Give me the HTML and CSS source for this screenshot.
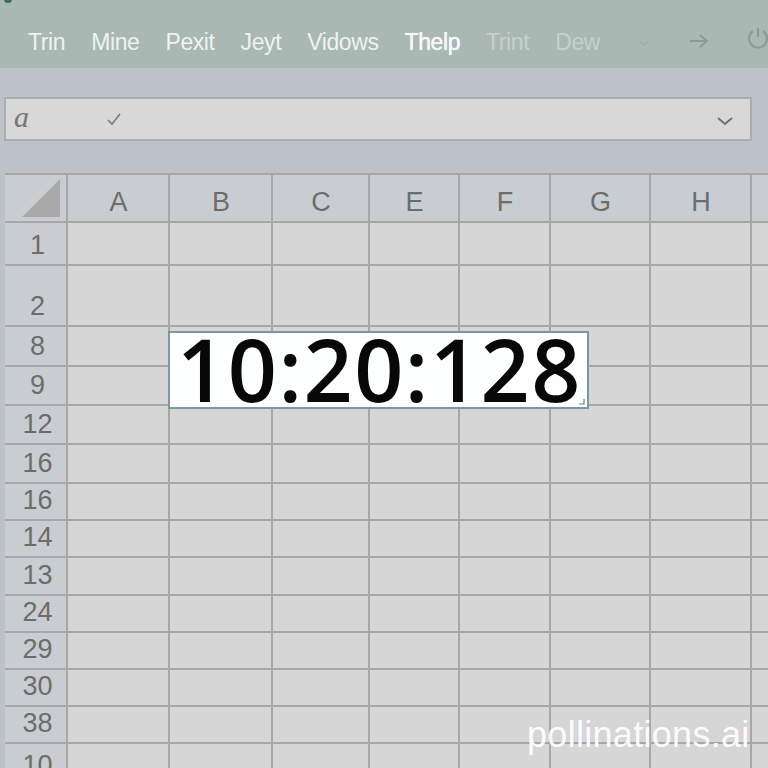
FILE: index.html
```html
<!DOCTYPE html>
<html lang="en">
<head>
    <meta charset="UTF-8">
    <meta name="viewport" content="width=device-width, initial-scale=1.0">
    <title>Sheet Timer</title>
    <link rel="stylesheet" href="styles.css">
</head>
<body>
    <span class="dot"></span>
    <div class="menubar">
        <span class="menu">Trin</span>
        <span class="menu">Mine</span>
        <span class="menu">Pexit</span>
        <span class="menu">Jeyt</span>
        <span class="menu">Vidows</span>
        <span class="menu strong">Thelp</span>
        <span class="menu faded">Trint</span>
        <span class="menu faded">Dew</span>
        <div class="icons">
            <svg class="ico-chev" width="14" height="8" viewBox="0 0 14 8"><path d="M2 2 L7 6 L12 2" fill="none" stroke="#9eaeaa" stroke-width="1.6"/></svg>
            <svg class="ico-arrow" width="22" height="16" viewBox="0 0 22 16"><path d="M2 8 H19 M12 2 L19 8 L12 14" fill="none" stroke="#8c9b97" stroke-width="2"/></svg>
            <svg class="ico-power" width="24" height="26" viewBox="0 0 24 26"><path d="M7 5 A9 9 0 1 0 17 5" fill="none" stroke="#8c9b97" stroke-width="2.2"/><path d="M12 2 V11" stroke="#8c9b97" stroke-width="2.2"/></svg>
        </div>
    </div>

    <div class="formula-area">
        <div class="formula">
            <span class="fx">a</span>
            <svg class="check" width="16" height="14" viewBox="0 0 16 14"><path d="M2 8 L6 12 L14 2" fill="none" stroke="#7a7a7a" stroke-width="1.6"/></svg>
            <svg class="drop" width="18" height="10" viewBox="0 0 18 10"><path d="M2 2 L9 8 L16 2" fill="none" stroke="#6f6f6f" stroke-width="2"/></svg>
        </div>
    </div>

    <div class="sheet">
        <div class="grid" id="grid"></div>
        <div class="timer">
            10:20:128
            <svg class="handle" width="7" height="7" viewBox="0 0 7 7"><path d="M6 1 V6 H1" fill="none" stroke="#6a7c84" stroke-width="1.2"/></svg>
        </div>
    </div>

    <div class="watermark">pollinations.ai</div>

    <script>
        const cols = ['A', 'B', 'C', 'E', 'F', 'G', 'H', ''];
        const rows = ['1', '2', '8', '9', '12', '16', '16', '14', '13', '24', '29', '30', '38', '10'];
        const grid = document.getElementById('grid');

        // header row with the corner triangle
        let html = '<div class="corner"><svg width="61" height="46" viewBox="0 0 61 46"><polygon points="17,42 55,4 55,42" fill="#a9a9a9"/></svg></div>';
        for (let c of cols) {
            html += '<div class="colhead">' + c + '</div>';
        }
        for (let r of rows) {
            html += '<div class="rowhead">' + r + '</div>';
            for (let i = 0; i < cols.length; i++) {
                html += '<div class="cell"></div>';
            }
        }
        grid.innerHTML = html;
    </script>
</body>
</html>
```

FILE: styles.css
```css
body {
    margin: 0;
    width: 768px;
    height: 768px;
    overflow: hidden;
    position: relative;
    background-color: #bcc2c8;
    font-family: "Liberation Sans", Arial, sans-serif;
}
.dot {
    position: absolute;
    left: 4px;
    top: -4px;
    width: 8px;
    height: 7px;
    border-radius: 50%;
    background-color: #3f6a5c;
}
.menubar {
    height: 68px;
    box-sizing: border-box;
    background-color: #a9b8b3;
    display: flex;
    align-items: flex-start;
    padding: 31px 0 0 28px;
    gap: 26px;
}
.menu {
    font-size: 23px;
    line-height: 1;
    letter-spacing: -0.4px;
    color: #eef2f0;
}
.menu.strong {
    color: #f7f9f8;
    text-shadow: 0 0 1px #ffffff;
}
.menu.faded {
    color: #c4d0cc;
}
.icons {
    display: flex;
    align-items: center;
    margin-left: 11px;
    margin-top: -1px;
}
.ico-chev {
    margin-top: 4px;
}
.ico-arrow {
    margin-left: 37px;
}
.ico-power {
    margin-left: 36px;
    margin-top: -4px;
}
.formula-area {
    height: 105px;
    box-sizing: border-box;
    padding: 29px 0 0 4px;
}
.formula {
    width: 748px;
    height: 44px;
    box-sizing: border-box;
    background-color: #d8d8d8;
    border: 2px solid #a9aeb2;
    display: flex;
    align-items: center;
    padding-left: 8px;
}
.fx {
    font-family: "Liberation Serif", serif;
    font-style: italic;
    font-size: 30px;
    line-height: 1;
    color: #777777;
    margin-top: -4px;
}
.check {
    margin-left: 77px;
}
.drop {
    margin-left: auto;
    margin-right: 16px;
    margin-top: 4px;
}
.sheet {
    position: relative;
    margin-left: 5px;
}
.grid {
    display: grid;
    grid-template-columns: 61px 100px 101px 95px 88px 89px 98px 99px 1fr;
    grid-template-rows: 46px 41px 59px 38px 37px 37px 37px 35px 35px 36px 35px 35px 35px 35px 40px;
    gap: 2px;
    padding-top: 2px;
    background-color: #a7a7a7;
}
.corner,
.colhead,
.rowhead {
    background-color: #c9ccd1;
    display: flex;
    align-items: flex-end;
    justify-content: center;
    font-size: 27px;
    line-height: 1;
    color: #6c6c6c;
    padding-bottom: 5px;
    box-sizing: border-box;
}
.rowhead {
    padding-left: 4px;
}
.colhead {
    padding-left: 1px;
}
.corner {
    padding: 0;
}
.cell {
    background-color: #d6d6d6;
}
.timer {
    position: absolute;
    left: 163px;
    top: 158px;
    width: 421px;
    height: 78px;
    box-sizing: border-box;
    border: 2px solid #7d97a2;
    background-color: #fdfefe;
    display: flex;
    align-items: center;
    justify-content: center;
    font-family: "Open Sans", "Noto Sans", sans-serif;
    font-weight: 600;
    font-size: 86px;
    line-height: 1;
    letter-spacing: 1.5px;
    color: #080808;
    padding: 0 0 3px 2px;
}
.handle {
    position: absolute;
    right: 2px;
    bottom: 2px;
}
.watermark {
    position: absolute;
    left: 527px;
    top: 717px;
    font-size: 36px;
    line-height: 1;
    letter-spacing: 0.3px;
    color: #ffffff;
    opacity: 0.92;
}
```
